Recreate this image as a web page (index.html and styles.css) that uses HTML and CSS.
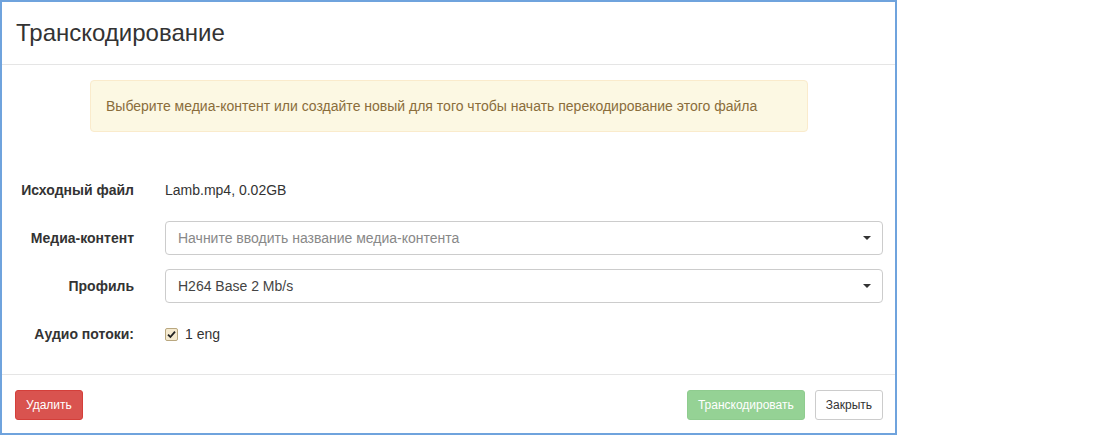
FILE: index.html
```html
<html>
  <head>
    <meta charset="UTF-8">
    <title>Транскодирование</title>
    <link rel="stylesheet" href="styles.css">
  </head>
  <body>
    <div class="modal">
      <div class="modal-header">
        <h4 class="modal-title">Транскодирование</h4>
      </div>
      <div class="modal-body">
        <div class="alert">Выберите медиа-контент или создайте новый для того чтобы начать перекодирование этого файла</div>
        <div class="form-row first">
          <label class="control-label">Исходный файл</label>
          <div class="static">Lamb.mp4, 0.02GB</div>
        </div>
        <div class="form-row">
          <label class="control-label">Медиа-контент</label>
          <div class="select">
            <span class="placeholder">Начните вводить название медиа-контента</span>
            <span class="caret"></span>
          </div>
        </div>
        <div class="form-row">
          <label class="control-label">Профиль</label>
          <div class="select">
            <span class="value">H264 Base 2 Mb/s</span>
            <span class="caret"></span>
          </div>
        </div>
        <div class="form-row">
          <label class="control-label">Аудио потоки:</label>
          <div class="static">
            <span class="check">
              <svg width="9" height="9" viewBox="0 0 9 9"><path d="M1 4.6 L3.4 7 L8 1.6" fill="none" stroke="#222" stroke-width="1.8"/></svg>
            </span>1 eng
          </div>
        </div>
      </div>
      <div class="modal-footer">
        <button class="btn btn-danger">Удалить</button>
        <div class="right">
          <button class="btn btn-success" disabled>Транскодировать</button>
          <button class="btn btn-default">Закрыть</button>
        </div>
      </div>
    </div>
  </body>
</html>
```

FILE: styles.css
```css
body {
  margin: 0;
  font-family: "Liberation Sans", Arial, sans-serif;
  font-size: 14px;
  line-height: 20px;
  color: #333;
  background: #fff;
}
.modal {
  box-sizing: border-box;
  width: 897px;
  height: 435px;
  border: 2px solid #6fa3dd;
  background: #fff;
}
.modal-header {
  padding: 15px 14px;
  border-bottom: 1px solid #e5e5e5;
}
.modal-title {
  margin: 0;
  font-size: 24px;
  line-height: 32px;
  font-weight: normal;
  color: #333;
}
.modal-body {
  padding: 15px 12px 23px 0;
}
.alert {
  box-sizing: border-box;
  width: 718px;
  margin: 0 0 41px 88px;
  padding: 15px;
  border: 1px solid #faebcc;
  border-radius: 4px;
  background: #fcf8e3;
  color: #8a6d3b;
}
.form-row {
  display: grid;
  grid-template-columns: 148px 1fr;
  column-gap: 15px;
  min-height: 34px;
  margin-top: 14px;
}
.form-row.first {
  margin-top: 0;
}
.control-label {
  padding: 7px 16px 0 0;
  text-align: right;
  font-weight: bold;
}
.static {
  display: flex;
  align-items: center;
  height: 20px;
  padding-top: 7px;
}
.select {
  box-sizing: border-box;
  height: 34px;
  padding: 6px 11px 6px 12px;
  border: 1px solid #ccc;
  border-radius: 4px;
  display: flex;
  align-items: center;
}
.placeholder {
  color: #888;
}
.value {
  color: #444;
}
.caret {
  margin-left: auto;
  width: 0;
  height: 0;
  border-top: 4px solid #333;
  border-left: 4px solid transparent;
  border-right: 4px solid transparent;
}
.check {
  box-sizing: border-box;
  width: 13px;
  height: 13px;
  margin-right: 7px;
  border: 1px solid #b9a77f;
  border-radius: 2px;
  background: #f5ead0;
  display: flex;
  align-items: center;
  justify-content: center;
}
.modal-footer {
  display: flex;
  justify-content: space-between;
  padding: 15px 12px 0 13px;
  border-top: 1px solid #e5e5e5;
}
.right {
  display: flex;
  gap: 10px;
}
.btn {
  font-family: "Liberation Sans", Arial, sans-serif;
  font-size: 12px;
  line-height: 18px;
  padding: 5px 10px;
  border: 1px solid transparent;
  border-radius: 3px;
  height: 30px;
}
.btn-danger {
  background: #d9534f;
  border-color: #d43f3a;
  color: #fff;
}
.btn-success {
  background: #95d295;
  border-color: #8fcc8f;
  color: #fff;
}
.btn-default {
  background: #fff;
  border-color: #ccc;
  color: #333;
}
```
